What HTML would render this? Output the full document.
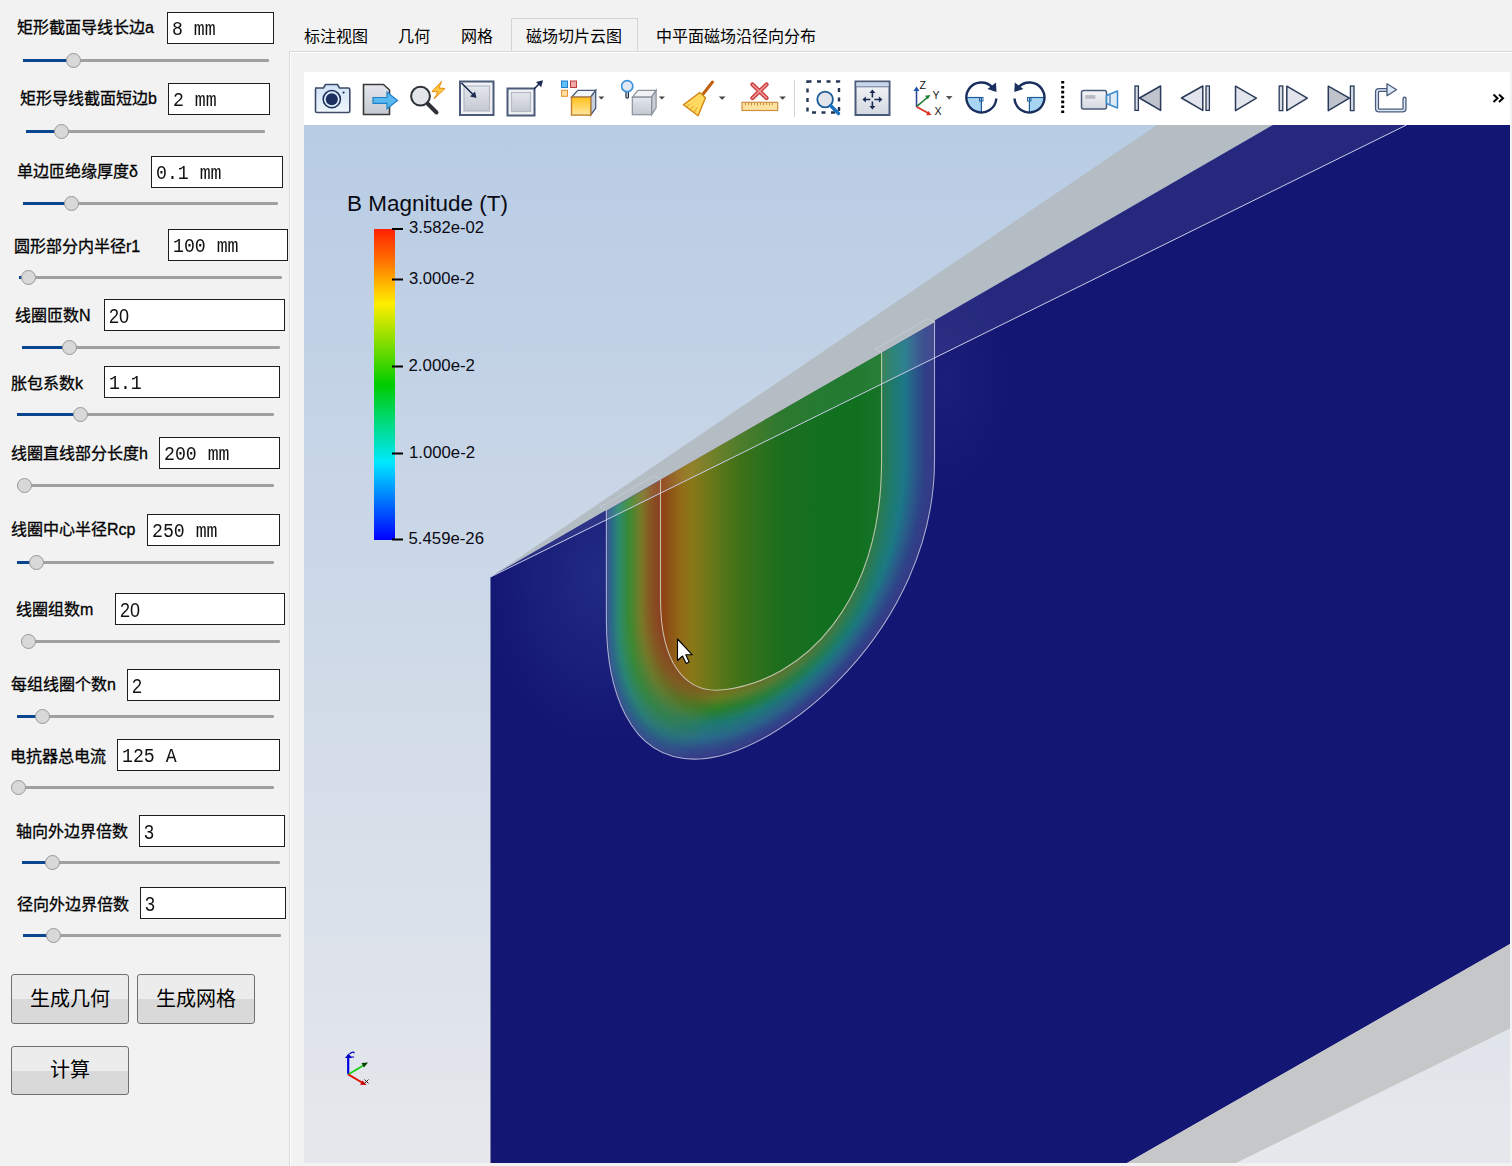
<!DOCTYPE html>
<html lang="zh-CN">
<head>
<meta charset="utf-8">
<style>
html,body{margin:0;padding:0;}
body{width:1512px;height:1166px;overflow:hidden;background:#f2f2f2;position:relative;font-family:"Liberation Sans",sans-serif;color:#000;}
.a{position:absolute;}
.lbl{position:absolute;font-size:16px;line-height:20px;white-space:nowrap;color:#000;-webkit-text-stroke:0.3px #000;}
.inp{position:absolute;box-sizing:border-box;background:#fff;border:1px solid #1e1e1e;height:32px;}
.inp span{position:absolute;left:4px;top:5px;font-family:"Liberation Mono",monospace;font-size:18.2px;line-height:22px;white-space:pre;transform:scaleY(1.08);transform-origin:0 0;color:#111;}
.inp span.s{font-family:"Liberation Sans",sans-serif;font-size:18px;}
.trk{position:absolute;height:3px;background:#a0a0a0;border-radius:1px;}
.trk i{position:absolute;left:0;top:0;height:3px;background:#0a4690;}
.hd{position:absolute;width:15px;height:15px;border-radius:50%;background:#d8d8d8;border:1px solid #989898;box-sizing:border-box;}
.btn{position:absolute;box-sizing:border-box;border:1px solid #707070;border-radius:3px;background:linear-gradient(#ececec 0,#ececec 50%,#d9d9d9 50%,#d9d9d9 100%);font-size:20px;text-align:center;line-height:46px;}
.tab{position:absolute;font-size:16px;line-height:20px;white-space:nowrap;margin-top:1px;}
</style>
</head>
<body>
<!-- left panel -->
<div class="lbl" style="left:17px;top:18px">矩形截面导线长边a</div>
<div class="inp" style="left:167px;top:12px;width:107px;"><span>8 mm</span></div>
<div class="trk" style="left:23px;top:59px;width:246px"><i style="width:50px"></i></div>
<div class="hd" style="left:66px;top:53px"></div>

<div class="lbl" style="left:20px;top:89px">矩形导线截面短边b</div>
<div class="inp" style="left:168px;top:83px;width:102px;"><span>2 mm</span></div>
<div class="trk" style="left:26px;top:130px;width:239px"><i style="width:35px"></i></div>
<div class="hd" style="left:54px;top:124px"></div>

<div class="lbl" style="left:17px;top:162px">单边匝绝缘厚度δ</div>
<div class="inp" style="left:151px;top:156px;width:132px;"><span>0.1 mm</span></div>
<div class="trk" style="left:23px;top:202px;width:255px"><i style="width:48px"></i></div>
<div class="hd" style="left:64px;top:196px"></div>

<div class="lbl" style="left:14px;top:237px">圆形部分内半径r1</div>
<div class="inp" style="left:168px;top:229px;width:120px;"><span>100 mm</span></div>
<div class="trk" style="left:19px;top:276px;width:263px"><i style="width:9px"></i></div>
<div class="hd" style="left:21px;top:270px"></div>

<div class="lbl" style="left:15px;top:306px">线圈匝数N</div>
<div class="inp" style="left:104px;top:299px;width:181px;"><span class="s">20</span></div>
<div class="trk" style="left:22px;top:346px;width:258px"><i style="width:47px"></i></div>
<div class="hd" style="left:62px;top:340px"></div>

<div class="lbl" style="left:11px;top:374px">胀包系数k</div>
<div class="inp" style="left:104px;top:366px;width:176px;"><span>1.1</span></div>
<div class="trk" style="left:17px;top:413px;width:257px"><i style="width:63px"></i></div>
<div class="hd" style="left:73px;top:407px"></div>

<div class="lbl" style="left:11px;top:444px">线圈直线部分长度h</div>
<div class="inp" style="left:159px;top:437px;width:121px;"><span>200 mm</span></div>
<div class="trk" style="left:17px;top:484px;width:257px"><i style="width:0px"></i></div>
<div class="hd" style="left:17px;top:478px"></div>

<div class="lbl" style="left:11px;top:520px">线圈中心半径Rcp</div>
<div class="inp" style="left:147px;top:514px;width:133px;"><span>250 mm</span></div>
<div class="trk" style="left:17px;top:561px;width:257px"><i style="width:18px"></i></div>
<div class="hd" style="left:29px;top:555px"></div>

<div class="lbl" style="left:16px;top:600px">线圈组数m</div>
<div class="inp" style="left:115px;top:593px;width:170px;"><span class="s">20</span></div>
<div class="trk" style="left:21px;top:640px;width:259px"><i style="width:0px"></i></div>
<div class="hd" style="left:21px;top:634px"></div>

<div class="lbl" style="left:11px;top:675px">每组线圈个数n</div>
<div class="inp" style="left:127px;top:669px;width:153px;"><span class="s">2</span></div>
<div class="trk" style="left:17px;top:715px;width:257px"><i style="width:25px"></i></div>
<div class="hd" style="left:35px;top:709px"></div>

<div class="lbl" style="left:10px;top:747px">电抗器总电流</div>
<div class="inp" style="left:117px;top:739px;width:163px;"><span>125 A</span></div>
<div class="trk" style="left:17px;top:786px;width:257px"><i style="width:0px"></i></div>
<div class="hd" style="left:11px;top:780px"></div>

<div class="lbl" style="left:16px;top:822px">轴向外边界倍数</div>
<div class="inp" style="left:139px;top:815px;width:146px;"><span class="s">3</span></div>
<div class="trk" style="left:22px;top:861px;width:258px"><i style="width:30px"></i></div>
<div class="hd" style="left:45px;top:855px"></div>

<div class="lbl" style="left:17px;top:895px">径向外边界倍数</div>
<div class="inp" style="left:140px;top:887px;width:146px;"><span class="s">3</span></div>
<div class="trk" style="left:23px;top:934px;width:258px"><i style="width:30px"></i></div>
<div class="hd" style="left:46px;top:928px"></div>

<div class="btn" style="left:11px;top:974px;width:118px;height:50px;padding-top:2px;box-sizing:border-box;line-height:44px">生成几何</div>
<div class="btn" style="left:137px;top:974px;width:118px;height:50px;padding-top:2px;box-sizing:border-box;line-height:44px">生成网格</div>
<div class="btn" style="left:11px;top:1046px;width:118px;height:49px">计算</div>

<!-- tab pane -->
<div class="a" style="left:289px;top:51px;width:1223px;height:1115px;border-left:1px solid #d9d9d9;border-top:1px solid #d9d9d9;box-sizing:border-box;"></div>
<div class="a" style="left:290px;top:52px;width:1222px;height:1114px;border-left:1px solid #fff;border-top:1px solid #fff;box-sizing:border-box;"></div>
<div class="a" style="left:511px;top:18px;width:127px;height:33px;border:1px solid #d4d4d4;border-bottom:none;background:#f2f2f2;box-sizing:border-box;"></div>
<div class="tab" style="left:304px;top:26px">标注视图</div>
<div class="tab" style="left:398px;top:26px">几何</div>
<div class="tab" style="left:461px;top:26px">网格</div>
<div class="tab" style="left:526px;top:26px">磁场切片云图</div>
<div class="tab" style="left:656px;top:26px">中平面磁场沿径向分布</div>

<!-- toolbar -->
<div class="a" id="tb" style="left:304px;top:72px;width:1206px;height:53px;background:#fff;"></div>
<svg class="a" style="left:304px;top:72px" width="1206" height="53" viewBox="304 72 1206 53">
<defs>
<linearGradient id="gg" x1="0" y1="0" x2="0" y2="1"><stop offset="0" stop-color="#f4f6f8"/><stop offset="1" stop-color="#d4d8e0"/></linearGradient>
<linearGradient id="gb" x1="0" y1="0" x2="0" y2="1"><stop offset="0" stop-color="#cfe2f6"/><stop offset="1" stop-color="#eef5fc"/></linearGradient>
<linearGradient id="gy" x1="0" y1="0" x2="0" y2="1"><stop offset="0" stop-color="#ffc01a"/><stop offset="1" stop-color="#ffe7a0"/></linearGradient>
<linearGradient id="gd" x1="0" y1="0" x2="0" y2="1"><stop offset="0" stop-color="#e4e7ec"/><stop offset="1" stop-color="#c4c8d0"/></linearGradient>
</defs>
<!-- 1 camera -->
<path d="M315,88 h8.5 l2,-3.5 h12 l2,3.5 h8.8 a1.5,1.5 0 0 1 1.5,1.5 v21.5 a1.5,1.5 0 0 1 -1.5,1.5 h-31.3 a1.5,1.5 0 0 1 -1.5,-1.5 v-21.5 a1.5,1.5 0 0 1 1.5,-1.5z" fill="url(#gb)" stroke="#3c4a66" stroke-width="1.6"/>
<circle cx="331.8" cy="99.2" r="8.6" fill="#dcebf9" stroke="#1c2e58" stroke-width="1.5"/>
<circle cx="331.8" cy="99.2" r="6" fill="#1a2f5e"/>
<circle cx="343.6" cy="92.6" r="1.1" fill="#1a2f5e"/>
<!-- 2 doc arrow -->
<path d="M363.5,84.5 h20 l6,5.5 v24.5 h-26z" fill="url(#gd)" stroke="#3a3a3a" stroke-width="1.6"/>
<path d="M373,97.5 h14 v-5.5 l10.5,8.5 l-10.5,8.3 v-5.5 h-14z" fill="#5ab8f0" stroke="#1e80c8" stroke-width="1.2"/>
<!-- 3 magnifier lightning -->
<path d="M441.5,81.5 l-9.5,10 l6,0.5 l-4,7 l11,-10.5 l-6,-0.5z" fill="#ffc640" stroke="#e88a10" stroke-width="1"/>
<circle cx="420.5" cy="96.2" r="9.4" fill="#e2e5ea" stroke="#2e3236" stroke-width="2"/>
<line x1="427.5" y1="103.5" x2="436.5" y2="112.5" stroke="#2e3236" stroke-width="4" stroke-linecap="round"/>
<!-- 4 square in -->
<rect x="460" y="81.5" width="33.5" height="33.5" fill="#f0f2f6" stroke="#4a5a78" stroke-width="2"/>
<rect x="464" y="86" width="25.5" height="25" fill="url(#gd)" stroke="#b4b8c2" stroke-width="1.2"/>
<line x1="461.5" y1="83" x2="474" y2="95.5" stroke="#1a2a50" stroke-width="1.6"/>
<path d="M476.5,98 l-6.5,-1.5 l5,-5z" fill="#1a2a50"/>
<!-- 5 square out -->
<rect x="507.5" y="88.5" width="27" height="27" fill="#f0f2f6" stroke="#4a5a78" stroke-width="2"/>
<rect x="511.5" y="92.5" width="19" height="19" fill="url(#gd)" stroke="#b4b8c2" stroke-width="1.2"/>
<line x1="534" y1="89" x2="540" y2="83" stroke="#1a2a50" stroke-width="1.6"/>
<path d="M543,80.3 l-1.8,7 l-5.2,-5.2z" fill="#1a2a50"/>
<!-- 6 color cube -->
<rect x="561.5" y="81" width="6" height="6.5" fill="#5fc0f8" stroke="#1f7fd0" stroke-width="1"/>
<rect x="570.5" y="81" width="6" height="6.5" fill="#f2a6a6" stroke="#b84040" stroke-width="1"/>
<rect x="561.5" y="90.3" width="6" height="6" fill="#ffe0a0" stroke="#e09030" stroke-width="1"/>
<path d="M571.5,97.2 l6.3,-6.9 h17.9 l-5,6.9z" fill="#f2f5f9" stroke="#4a5a78" stroke-width="1.3"/>
<path d="M590.7,97.2 l5,-6.9 v17.9 l-5,6.9z" fill="#c6ceda" stroke="#4a5a78" stroke-width="1.3"/>
<rect x="571.5" y="97.2" width="19.2" height="17.9" fill="url(#gy)" stroke="#c08030" stroke-width="1.4"/>
<path d="M598.3,96.4 h6.1 l-3.05,3.1z" fill="#444"/>
<!-- 7 light cube -->
<path d="M632.5,97.2 l5.3,-6.9 h18.3 l-4.5,6.9z" fill="#f0f2f5" stroke="#8a929c" stroke-width="1.2"/>
<path d="M651.6,97.2 l4.5,-6.9 v17.5 l-4.5,6.9z" fill="#c8ced6" stroke="#8a929c" stroke-width="1.2"/>
<rect x="632.3" y="97.2" width="19.3" height="17.5" fill="url(#gd)" stroke="#8a929c" stroke-width="1.2"/>
<line x1="627.2" y1="90" x2="627.2" y2="97" stroke="#1a2a40" stroke-width="3.6" stroke-linecap="round"/>
<line x1="627.2" y1="90" x2="627.2" y2="97" stroke="#e8eef6" stroke-width="1.2" stroke-linecap="round"/>
<circle cx="627.2" cy="86.2" r="5.6" fill="#dfe8f4" stroke="#3a90d8" stroke-width="1.6"/>
<path d="M658.8,96.4 h6.1 l-3.05,3.1z" fill="#444"/>
<!-- 8 broom -->
<line x1="712.5" y1="82" x2="703.5" y2="93.5" stroke="#c06010" stroke-width="3" stroke-linecap="round"/>
<path d="M699.8,92.5 l5.7,5.3 l-7.4,18 l-14.7,-11z" fill="#ffd860" stroke="#d08010" stroke-width="1.3" stroke-linejoin="round"/>
<path d="M686.5,107 l3,-3 M690,110 l3.5,-4 M694,112.5 l3,-5" stroke="#d09020" stroke-width="0.8"/>
<path d="M718.7,96.6 h6.9 l-3.45,3.2z" fill="#444"/>
<!-- 9 ruler x -->
<rect x="742" y="102.3" width="35.7" height="8.2" fill="#ffe2a2" stroke="#d09040" stroke-width="1.2"/>
<path d="M745.5,103 v2.5 M748.5,103 v2 M751.5,103 v2.5 M754.5,103 v2 M757.5,103 v3 M760.5,103 v2 M763.5,103 v2.5 M766.5,103 v2 M769.5,103 v2.5 M772.5,103 v2" stroke="#c08830" stroke-width="0.9"/>
<path d="M752.5,84.5 L766.5,98 M766.5,84.5 L752.5,98" stroke="#c83838" stroke-width="4.2" stroke-linecap="round"/>
<path d="M752.5,84.5 L766.5,98 M766.5,84.5 L752.5,98" stroke="#f29a9a" stroke-width="1.6" stroke-linecap="round"/>
<path d="M779.4,96.6 h6.5 l-3.25,3.2z" fill="#444"/>
<line x1="794.5" y1="79.5" x2="794.5" y2="117" stroke="#d4d4d4" stroke-width="1"/>
<!-- 10 dashed zoom -->
<rect x="807.5" y="81.5" width="31.5" height="31" fill="none" stroke="#263652" stroke-width="2.4" stroke-dasharray="4 5.5"/>
<circle cx="825.1" cy="99.5" r="7.8" fill="#e2e5ea" stroke="#1a5a98" stroke-width="1.8"/>
<line x1="830.5" y1="105.5" x2="838.5" y2="113.5" stroke="#1a70c0" stroke-width="3.4" stroke-linecap="round"/>
<!-- 11 pan window -->
<rect x="855.5" y="81.5" width="34" height="33.5" fill="url(#gg)" stroke="#4a5a78" stroke-width="2"/>
<rect x="856.5" y="82.5" width="32" height="4" fill="#c8d6ec"/>
<line x1="856" y1="86.8" x2="889" y2="86.8" stroke="#6a7a98" stroke-width="1"/>
<path d="M872.4,89.5 l-3,3.5 h2.2 v4.5 h1.6 v-4.5 h2.2z M872.4,109.5 l-3,-3.5 h2.2 v-4.5 h1.6 v4.5 h2.2z M862.4,99.5 l3.5,-3 v2.2 h4.5 v1.6 h-4.5 v2.2z M882.4,99.5 l-3.5,-3 v2.2 h-4.5 v1.6 h4.5 v2.2z" fill="#1a2a50"/>
<!-- 12 axes -->
<line x1="916.5" y1="106.7" x2="916.5" y2="90" stroke="#2a4a98" stroke-width="1.6"/>
<path d="M913.5,91 l3,-4.5 l3,4.5z" fill="#2050b0"/>
<line x1="916.5" y1="106.7" x2="928" y2="97" stroke="#1a7a30" stroke-width="1.6"/>
<path d="M930.5,95 l-5.5,0.8 l2.8,3.5z" fill="#188030"/>
<line x1="916.5" y1="106.7" x2="928" y2="113" stroke="#d83020" stroke-width="1.6"/>
<path d="M931.5,115 l-5.5,0.2 l2.3,-4.2z" fill="#e03020"/>
<text x="919.5" y="88.5" font-family="Liberation Sans" font-size="10.5" fill="#111">Z</text>
<text x="932.5" y="99" font-family="Liberation Sans" font-size="10.5" fill="#111">Y</text>
<text x="934.5" y="115" font-family="Liberation Sans" font-size="10.5" fill="#111">X</text>
<path d="M945.9,96 h6.6 l-3.3,3.8z" fill="#555"/>
<!-- 13 rotate cw -->
<path d="M981.4,97.5 v15 a15,15 0 0 1 -15,-15z" fill="#a8d6f2"/>
<rect x="979.5" y="97.5" width="3.5" height="3.5" fill="none" stroke="#1a5a98" stroke-width="0.9"/>
<line x1="966.4" y1="97.5" x2="981.4" y2="97.5" stroke="#1a5a98" stroke-width="1.2"/>
<line x1="981.4" y1="97.5" x2="981.4" y2="112.5" stroke="#1a5a98" stroke-width="1.2"/>
<path d="M996.3,98.5 A15,15 0 1 1 992.5,87.5" fill="none" stroke="#1a2f5e" stroke-width="2.4"/>
<path d="M996,82.5 l0.5,9.5 l-9,-3z" fill="#1a2f5e"/>
<!-- 14 rotate ccw -->
<path d="M1029.4,97.5 v15 a15,15 0 0 0 15,-15z" fill="#a8d6f2"/>
<rect x="1027.5" y="97.5" width="3.5" height="3.5" fill="none" stroke="#1a5a98" stroke-width="0.9"/>
<line x1="1029.4" y1="97.5" x2="1044.4" y2="97.5" stroke="#1a5a98" stroke-width="1.2"/>
<line x1="1029.4" y1="97.5" x2="1029.4" y2="112.5" stroke="#1a5a98" stroke-width="1.2"/>
<path d="M1014.5,98.5 A15,15 0 1 0 1018.3,87.5" fill="none" stroke="#1a2f5e" stroke-width="2.4"/>
<path d="M1014.8,82.5 l-0.5,9.5 l9,-3z" fill="#1a2f5e"/>
<line x1="1062.7" y1="81" x2="1062.7" y2="115" stroke="#000" stroke-width="3" stroke-dasharray="2.6 2.3"/>
<!-- 15 video camera -->
<rect x="1081.5" y="90.5" width="25" height="18.5" rx="2" fill="url(#gg)" stroke="#4a5a78" stroke-width="1.5"/>
<rect x="1085.2" y="95.1" width="10.2" height="3.7" fill="#b8bcc2"/>
<path d="M1106.5,95.5 l11,-4.5 v17 l-11,-4.5z" fill="#dcecf8" stroke="#3a8ad0" stroke-width="1.5" stroke-linejoin="round"/>
<line x1="1110" y1="95" x2="1110" y2="104" stroke="#2a5a98" stroke-width="1"/>
<!-- 16 first -->
<rect x="1135" y="86" width="3.4" height="24.4" fill="#d8dce4" stroke="#2a3a58" stroke-width="1.3"/>
<path d="M1139.5,98 L1160.6,86 V110.4z" fill="#bfc3cb" stroke="#2a3a58" stroke-width="1.5" stroke-linejoin="round"/>
<!-- 17 prev -->
<path d="M1181.5,98 L1202.8,86 V110.4z" fill="#e2e6ec" stroke="#2a3a58" stroke-width="1.5" stroke-linejoin="round"/>
<rect x="1206" y="86" width="3.4" height="24.4" fill="#d8dce4" stroke="#2a3a58" stroke-width="1.3"/>
<!-- 18 play -->
<path d="M1235.5,86.2 L1256.4,98.1 L1235.5,110.7z" fill="#e2e6ec" stroke="#2a3a58" stroke-width="1.5" stroke-linejoin="round"/>
<!-- 19 next -->
<rect x="1279.2" y="86" width="3.6" height="24.6" fill="#d8dce4" stroke="#2a3a58" stroke-width="1.3"/>
<path d="M1286.8,86.2 L1307.3,98.1 L1286.8,110.7z" fill="#e2e6ec" stroke="#2a3a58" stroke-width="1.5" stroke-linejoin="round"/>
<!-- 20 last -->
<path d="M1328.3,86.2 L1349.4,98.1 L1328.3,110.7z" fill="#bfc3cb" stroke="#2a3a58" stroke-width="1.5" stroke-linejoin="round"/>
<rect x="1350.4" y="86" width="3.6" height="24.6" fill="#d8dce4" stroke="#2a3a58" stroke-width="1.3"/>
<!-- 21 loop -->
<path d="M1388,90 h-9 a2,2 0 0 0 -2,2 v16.5 a2,2 0 0 0 2,2 h23.5 a2,2 0 0 0 2,-2 v-9.8" fill="none" stroke="#4a5a78" stroke-width="4.2" stroke-linecap="round" stroke-linejoin="round"/>
<path d="M1388,90 h-9 a2,2 0 0 0 -2,2 v16.5 a2,2 0 0 0 2,2 h23.5 a2,2 0 0 0 2,-2 v-9.8" fill="none" stroke="#dbe9f8" stroke-width="1.6" stroke-linecap="round" stroke-linejoin="round"/>
<path d="M1387,85.5 v-1.8 l9.5,6 l-9.5,6 v-1.8z" fill="#dbe9f8" stroke="#4a5a78" stroke-width="1.3" stroke-linejoin="round"/>
<!-- >> -->
<path d="M1493.5,94.5 l4,3.7 l-4,3.7 M1499,94.5 l4,3.7 l-4,3.7" fill="none" stroke="#000" stroke-width="2"/>
</svg>

<!-- 3D view -->
<svg class="a" style="left:304px;top:125px" width="1206" height="1038" viewBox="304 125 1206 1038">
<defs>
<linearGradient id="bg" x1="0" y1="0" x2="0" y2="1">
<stop offset="0" stop-color="#b8cce4"/><stop offset="1" stop-color="#e6e8ec"/>
</linearGradient>
<linearGradient id="cb" x1="0" y1="1" x2="0" y2="0">
<stop offset="0" stop-color="#0000ff"/><stop offset="0.25" stop-color="#00e8ff"/><stop offset="0.5" stop-color="#00cc00"/><stop offset="0.76" stop-color="#ffee00"/><stop offset="0.9" stop-color="#ff7000"/><stop offset="1" stop-color="#ff2000"/>
</linearGradient>
</defs>
<rect x="304" y="125" width="1206" height="1038" fill="url(#bg)"/>
<polygon points="490.5,577 1157,125 1273,125" fill="#b4bcc4"/>
<polygon points="490.5,577 1273,125 1510,125 1510,944 1127,1163 490.5,1163" fill="#131672"/>
<defs>
<linearGradient id="k0" x1="0" y1="0" x2="1" y2="0"><stop offset="0" stop-color="#3a5a90"/><stop offset="0.28" stop-color="#383c88"/><stop offset="1" stop-color="#383a86"/></linearGradient>
<linearGradient id="k1" x1="0" y1="0" x2="1" y2="0"><stop offset="0" stop-color="#31638d"/><stop offset="0.28" stop-color="#354089"/><stop offset="1" stop-color="#363b86"/></linearGradient>
<linearGradient id="k2" x1="0" y1="0" x2="1" y2="0"><stop offset="0" stop-color="#2a6c88"/><stop offset="0.28" stop-color="#334489"/><stop offset="1" stop-color="#333d87"/></linearGradient>
<linearGradient id="k3" x1="0" y1="0" x2="1" y2="0"><stop offset="0" stop-color="#2a7680"/><stop offset="0.28" stop-color="#30488a"/><stop offset="1" stop-color="#313e87"/></linearGradient>
<linearGradient id="k4" x1="0" y1="0" x2="1" y2="0"><stop offset="0" stop-color="#2a8078"/><stop offset="0.28" stop-color="#2e518a"/><stop offset="1" stop-color="#2f4088"/></linearGradient>
<linearGradient id="k5" x1="0" y1="0" x2="1" y2="0"><stop offset="0" stop-color="#2a8a70"/><stop offset="0.28" stop-color="#2d598a"/><stop offset="1" stop-color="#2d4488"/></linearGradient>
<linearGradient id="k6" x1="0" y1="0" x2="1" y2="0"><stop offset="0" stop-color="#2d8a63"/><stop offset="0.28" stop-color="#2c618a"/><stop offset="1" stop-color="#2d4a89"/></linearGradient>
<linearGradient id="k7" x1="0" y1="0" x2="1" y2="0"><stop offset="0" stop-color="#308a56"/><stop offset="0.28" stop-color="#2a6a8a"/><stop offset="1" stop-color="#2c4f89"/></linearGradient>
<linearGradient id="k8" x1="0" y1="0" x2="1" y2="0"><stop offset="0" stop-color="#348a4a"/><stop offset="0.28" stop-color="#286d85"/><stop offset="1" stop-color="#2b558a"/></linearGradient>
<linearGradient id="k9" x1="0" y1="0" x2="1" y2="0"><stop offset="0" stop-color="#378a3d"/><stop offset="0.28" stop-color="#267081"/><stop offset="1" stop-color="#2a5a8a"/></linearGradient>
<linearGradient id="k10" x1="0" y1="0" x2="1" y2="0"><stop offset="0" stop-color="#3a8a30"/><stop offset="0.28" stop-color="#23737c"/><stop offset="1" stop-color="#27608a"/></linearGradient>
<linearGradient id="k11" x1="0" y1="0" x2="1" y2="0"><stop offset="0" stop-color="#46872f"/><stop offset="0.28" stop-color="#217677"/><stop offset="1" stop-color="#236789"/></linearGradient>
<linearGradient id="k12" x1="0" y1="0" x2="1" y2="0"><stop offset="0" stop-color="#51842d"/><stop offset="0.28" stop-color="#1f7972"/><stop offset="1" stop-color="#206d89"/></linearGradient>
<linearGradient id="k13" x1="0" y1="0" x2="1" y2="0"><stop offset="0" stop-color="#5d812c"/><stop offset="0.28" stop-color="#1f7b69"/><stop offset="1" stop-color="#1d7388"/></linearGradient>
<linearGradient id="k14" x1="0" y1="0" x2="1" y2="0"><stop offset="0" stop-color="#697e2a"/><stop offset="0.28" stop-color="#227c5a"/><stop offset="1" stop-color="#1a7887"/></linearGradient>
<linearGradient id="k15" x1="0" y1="0" x2="1" y2="0"><stop offset="0" stop-color="#747b29"/><stop offset="0.28" stop-color="#247d4c"/><stop offset="1" stop-color="#1b7882"/></linearGradient>
<linearGradient id="k16" x1="0" y1="0" x2="1" y2="0"><stop offset="0" stop-color="#7c7627"/><stop offset="0.28" stop-color="#267e3e"/><stop offset="1" stop-color="#1c797d"/></linearGradient>
<linearGradient id="k17" x1="0" y1="0" x2="1" y2="0"><stop offset="0" stop-color="#7f6d26"/><stop offset="0.28" stop-color="#297f2f"/><stop offset="1" stop-color="#1d7978"/></linearGradient>
<linearGradient id="k18" x1="0" y1="0" x2="1" y2="0"><stop offset="0" stop-color="#826525"/><stop offset="0.28" stop-color="#317f27"/><stop offset="1" stop-color="#1d7a74"/></linearGradient>
<linearGradient id="k19" x1="0" y1="0" x2="1" y2="0"><stop offset="0" stop-color="#865d24"/><stop offset="0.28" stop-color="#3f7e25"/><stop offset="1" stop-color="#1e7a6e"/></linearGradient>
<linearGradient id="k20" x1="0" y1="0" x2="1" y2="0"><stop offset="0" stop-color="#895422"/><stop offset="0.28" stop-color="#4e7d24"/><stop offset="1" stop-color="#207a68"/></linearGradient>
<linearGradient id="k21" x1="0" y1="0" x2="1" y2="0"><stop offset="0" stop-color="#8a4f22"/><stop offset="0.28" stop-color="#5c7b22"/><stop offset="1" stop-color="#227a62"/></linearGradient>
<linearGradient id="k22" x1="0" y1="0" x2="1" y2="0"><stop offset="0" stop-color="#8a4a22"/><stop offset="0.28" stop-color="#6a7a20"/><stop offset="1" stop-color="#247a5b"/></linearGradient>
<linearGradient id="k23" x1="0" y1="0" x2="1" y2="0"><stop offset="0" stop-color="#8a4522"/><stop offset="0.28" stop-color="#6f7520"/><stop offset="1" stop-color="#267a55"/></linearGradient>
<linearGradient id="k24" x1="0" y1="0" x2="1" y2="0"><stop offset="0" stop-color="#8a4122"/><stop offset="0.28" stop-color="#756f20"/><stop offset="1" stop-color="#287a4e"/></linearGradient>
<linearGradient id="k25" x1="0" y1="0" x2="1" y2="0"><stop offset="0" stop-color="#8a3c22"/><stop offset="0.28" stop-color="#7a6a20"/><stop offset="1" stop-color="#2a7a48"/></linearGradient>
<linearGradient id="inr" x1="0" y1="0" x2="1" y2="0"><stop offset="0" stop-color="#923c14"/><stop offset="0.04" stop-color="#8c5216"/><stop offset="0.09" stop-color="#926a18"/><stop offset="0.14" stop-color="#8a7818"/><stop offset="0.27" stop-color="#5a7618"/><stop offset="0.36" stop-color="#3e7218"/><stop offset="0.54" stop-color="#1c6e1e"/><stop offset="0.72" stop-color="#127020"/><stop offset="0.9" stop-color="#107020"/><stop offset="1" stop-color="#187428"/></linearGradient>
<radialGradient id="glowL" cx="600" cy="575" r="130" gradientUnits="userSpaceOnUse" gradientTransform="translate(600 575) scale(0.9 1.3) translate(-600 -575)"><stop offset="0" stop-color="#2a3890" stop-opacity="0.6"/><stop offset="1" stop-color="#2a3890" stop-opacity="0"/></radialGradient>
<radialGradient id="glowR" cx="945" cy="380" r="80" gradientUnits="userSpaceOnUse" gradientTransform="translate(945 380) scale(0.8 1.4) translate(-945 -380)"><stop offset="0" stop-color="#2a3088" stop-opacity="0.35"/><stop offset="1" stop-color="#2a3088" stop-opacity="0"/></radialGradient>
<clipPath id="slabclip"><polygon points="490.5,577 1273,125 1510,125 1510,944 1127,1163 490.5,1163"/></clipPath>
<clipPath id="outclip"><path d="M606.4,510.6 L606.4,620.0 C606.4,683.9 626.1,762.7 699.4,759.0 C779.9,755.1 934.5,629.1 934.5,460.0 L934.5,321.8 Z"/></clipPath>
<filter id="bl1" x="-5%" y="-5%" width="110%" height="110%"><feGaussianBlur stdDeviation="1.2"/></filter>
</defs>
<g clip-path="url(#slabclip)">
<rect x="480" y="400" width="240" height="360" fill="url(#glowL)"/>
<rect x="860" y="250" width="200" height="300" fill="url(#glowR)"/>
</g>
<g clip-path="url(#outclip)"><g filter="url(#bl1)">
<path d="M606.4,510.6 L606.4,620.0 C606.4,683.9 626.1,762.7 699.4,759.0 C779.9,755.1 934.5,629.1 934.5,460.0 L934.5,321.8 Z" fill="url(#k0)"/>
<path d="M608.6,509.4 L608.6,619.2 C608.6,683.0 628.4,760.0 700.4,756.2 C780.9,752.1 932.4,628.1 932.4,460.0 L932.4,323.0 Z" fill="url(#k1)"/>
<path d="M610.7,508.1 L610.7,618.3 C610.7,682.0 630.7,757.2 701.3,753.5 C781.8,749.1 930.3,627.0 930.3,460.0 L930.3,324.3 Z" fill="url(#k2)"/>
<path d="M612.9,506.9 L612.9,617.5 C612.9,681.1 633.0,754.5 702.3,750.7 C782.8,746.1 928.2,626.0 928.2,460.0 L928.2,325.5 Z" fill="url(#k3)"/>
<path d="M615.1,505.6 L615.1,616.6 C615.1,680.2 635.3,751.8 703.3,747.9 C783.8,743.1 926.0,625.0 926.0,460.0 L926.0,326.7 Z" fill="url(#k4)"/>
<path d="M617.2,504.4 L617.2,615.8 C617.2,679.3 637.6,749.1 704.2,745.2 C784.7,740.1 923.9,623.9 923.9,460.0 L923.9,328.0 Z" fill="url(#k5)"/>
<path d="M619.4,503.2 L619.4,614.9 C619.4,678.3 639.9,746.3 705.2,742.4 C785.7,737.1 921.8,622.9 921.8,460.0 L921.8,329.2 Z" fill="url(#k6)"/>
<path d="M621.5,501.9 L621.5,614.1 C621.5,677.4 642.2,743.6 706.1,739.6 C786.7,734.1 919.7,621.9 919.7,460.0 L919.7,330.4 Z" fill="url(#k7)"/>
<path d="M623.7,500.7 L623.7,613.2 C623.7,676.5 644.5,740.9 707.1,736.9 C787.6,731.1 917.6,620.8 917.6,460.0 L917.6,331.7 Z" fill="url(#k8)"/>
<path d="M625.9,499.4 L625.9,612.4 C625.9,675.5 646.8,738.1 708.1,734.1 C788.6,728.1 915.5,619.8 915.5,460.0 L915.5,332.9 Z" fill="url(#k9)"/>
<path d="M628.0,498.2 L628.0,611.6 C628.0,674.6 649.1,735.4 709.0,731.3 C789.6,725.1 913.3,618.8 913.3,460.0 L913.3,334.1 Z" fill="url(#k10)"/>
<path d="M630.2,497.0 L630.2,610.7 C630.2,673.7 651.4,732.7 710.0,728.6 C790.5,722.1 911.2,617.7 911.2,460.0 L911.2,335.4 Z" fill="url(#k11)"/>
<path d="M632.4,495.7 L632.4,609.9 C632.4,672.8 653.7,730.0 711.0,725.8 C791.5,719.1 909.1,616.7 909.1,460.0 L909.1,336.6 Z" fill="url(#k12)"/>
<path d="M634.5,494.5 L634.5,609.0 C634.5,671.8 656.1,727.2 711.9,723.0 C792.5,716.2 907.0,615.7 907.0,460.1 L907.0,337.8 Z" fill="url(#k13)"/>
<path d="M636.7,493.2 L636.7,608.2 C636.7,670.9 658.4,724.5 712.9,720.2 C793.5,713.2 904.9,614.7 904.9,460.1 L904.9,339.0 Z" fill="url(#k14)"/>
<path d="M638.9,492.0 L638.9,607.3 C638.9,670.0 660.7,721.8 713.9,717.5 C794.4,710.2 902.8,613.6 902.8,460.1 L902.8,340.3 Z" fill="url(#k15)"/>
<path d="M641.0,490.8 L641.0,606.5 C641.0,669.1 663.0,719.1 714.8,714.7 C795.4,707.2 900.6,612.6 900.6,460.1 L900.6,341.5 Z" fill="url(#k16)"/>
<path d="M643.2,489.5 L643.2,605.7 C643.2,668.1 665.3,716.3 715.8,711.9 C796.4,704.2 898.5,611.6 898.5,460.1 L898.5,342.7 Z" fill="url(#k17)"/>
<path d="M645.4,488.3 L645.4,604.8 C645.4,667.2 667.6,713.6 716.8,709.2 C797.3,701.2 896.4,610.5 896.4,460.1 L896.4,344.0 Z" fill="url(#k18)"/>
<path d="M647.5,487.0 L647.5,604.0 C647.5,666.3 669.9,710.9 717.7,706.4 C798.3,698.2 894.3,609.5 894.3,460.1 L894.3,345.2 Z" fill="url(#k19)"/>
<path d="M649.7,485.8 L649.7,603.1 C649.7,665.3 672.2,708.1 718.7,703.6 C799.3,695.2 892.2,608.5 892.2,460.1 L892.2,346.4 Z" fill="url(#k20)"/>
<path d="M651.8,484.6 L651.8,602.3 C651.8,664.4 674.5,705.4 719.6,700.9 C800.2,692.2 890.1,607.4 890.1,460.1 L890.1,347.7 Z" fill="url(#k21)"/>
<path d="M654.0,483.3 L654.0,601.4 C654.0,663.5 676.8,702.7 720.6,698.1 C801.2,689.2 887.9,606.4 887.9,460.1 L887.9,348.9 Z" fill="url(#k22)"/>
<path d="M656.2,482.1 L656.2,600.6 C656.2,662.6 679.1,700.0 721.6,695.3 C802.2,686.2 885.8,605.4 885.8,460.1 L885.8,350.1 Z" fill="url(#k23)"/>
<path d="M658.3,480.8 L658.3,599.7 C658.3,661.6 681.4,697.2 722.5,692.6 C803.1,683.2 883.7,604.3 883.7,460.1 L883.7,351.4 Z" fill="url(#k24)"/>
<path d="M660.5,479.6 L660.5,598.9 C660.5,660.7 683.7,694.5 723.5,689.8 C804.1,680.2 881.6,603.3 881.6,460.1 L881.6,352.6 Z" fill="url(#k25)"/>
</g></g>
<path d="M660.5,479.6 L660.5,598.9 C660.5,660.7 683.7,694.5 723.5,689.8 C804.1,680.2 881.6,603.3 881.6,460.1 L881.6,352.6 Z" fill="url(#inr)"/>
<path d="M606.4,510.6 L606.4,620 C606.4,683.9 626.1,762.7 699.4,759.0 C779.9,755.1 934.5,629.1 934.5,460 L934.5,321.8" fill="none" stroke="#b8bcd8" stroke-width="1.1" opacity="0.9"/>
<path d="M660.5,479.6 L660.5,598.9 C660.5,660.7 683.7,694.5 723.5,689.8 C804.1,680.2 881.6,603.3 881.6,460.1 L881.6,352.6" fill="none" stroke="#d0d4c0" stroke-width="1.1" opacity="0.85"/>
<polygon points="605.9,509.3 935,319.6 935,322 605.9,511" fill="#b6bcc2"/>
<polygon points="490.5,577 1273,125 1406.5,125" fill="#ffffff" opacity="0.08"/>
<line x1="490.5" y1="577" x2="1406.5" y2="125" stroke="#c8cce8" stroke-width="1"/>
<polyline points="606.4,510.6 600,507.2 654,476 660.5,479.6" fill="none" stroke="#d8dce4" stroke-width="0.9" opacity="0.5"/>
<polyline points="881.6,352.6 875,349.2 928,318.4 934.5,321.8" fill="none" stroke="#d8dce4" stroke-width="0.9" opacity="0.5"/>
<path d="M677.5,639 L677.5,660.5 L682.5,656 L686.2,663.5 L689.2,662 L685.8,654.8 L692.3,654.8 Z" fill="#fff" stroke="#000" stroke-width="1.1" stroke-linejoin="round"/>
<polygon points="1127,1163 1510,944 1510,1028.5 1236,1163" fill="#c5c7c9"/>
<rect x="374" y="229" width="21" height="311" fill="url(#cb)"/>
<g stroke="#000" stroke-width="2">
<line x1="392" y1="229" x2="403" y2="229"/><line x1="392" y1="279.5" x2="403" y2="279.5"/><line x1="392" y1="366.5" x2="403" y2="366.5"/><line x1="392" y1="453.5" x2="403" y2="453.5"/><line x1="392" y1="539.5" x2="403" y2="539.5"/>
</g>
<g font-family="Liberation Sans" font-size="16" fill="#0a0a14">
<text x="409" y="233" textLength="75" lengthAdjust="spacingAndGlyphs">3.582e-02</text>
<text x="409" y="284" textLength="65.5" lengthAdjust="spacingAndGlyphs">3.000e-2</text>
<text x="408.5" y="371" textLength="66.5" lengthAdjust="spacingAndGlyphs">2.000e-2</text>
<text x="409" y="458" textLength="66" lengthAdjust="spacingAndGlyphs">1.000e-2</text>
<text x="408.5" y="544" textLength="75.5" lengthAdjust="spacingAndGlyphs">5.459e-26</text>
</g>
<g>
<line x1="348.2" y1="1074.4" x2="348.2" y2="1056" stroke="#0000e0" stroke-width="2.2"/>
<path d="M345,1058 l3.5,-4.5 l3.5,4.5z" fill="#0000c0"/>
<path d="M349.5,1054 q3,-3 5,-1 M350,1057 h4" stroke="#0000c0" stroke-width="1.2" fill="none"/>
<line x1="348.2" y1="1074.4" x2="364" y2="1065" stroke="#10d010" stroke-width="1.8"/>
<path d="M368,1062.5 l-6.5,0.5 l2.5,4.5z" fill="#004000"/>
<line x1="348.2" y1="1074.4" x2="362" y2="1082.5" stroke="#e01000" stroke-width="2"/>
<path d="M366.5,1085 l-6.5,-0.2 l2.7,-4.2z" fill="#d00000"/>
<path d="M364.5,1079.5 l4,4 M368.5,1079.5 l-4,4" stroke="#301010" stroke-width="0.9"/>
</g>
<text x="347" y="210.5" font-family="Liberation Sans" font-size="22" fill="#0a0a14" textLength="161" lengthAdjust="spacingAndGlyphs">B Magnitude (T)</text>
</svg>
</body>
</html>
